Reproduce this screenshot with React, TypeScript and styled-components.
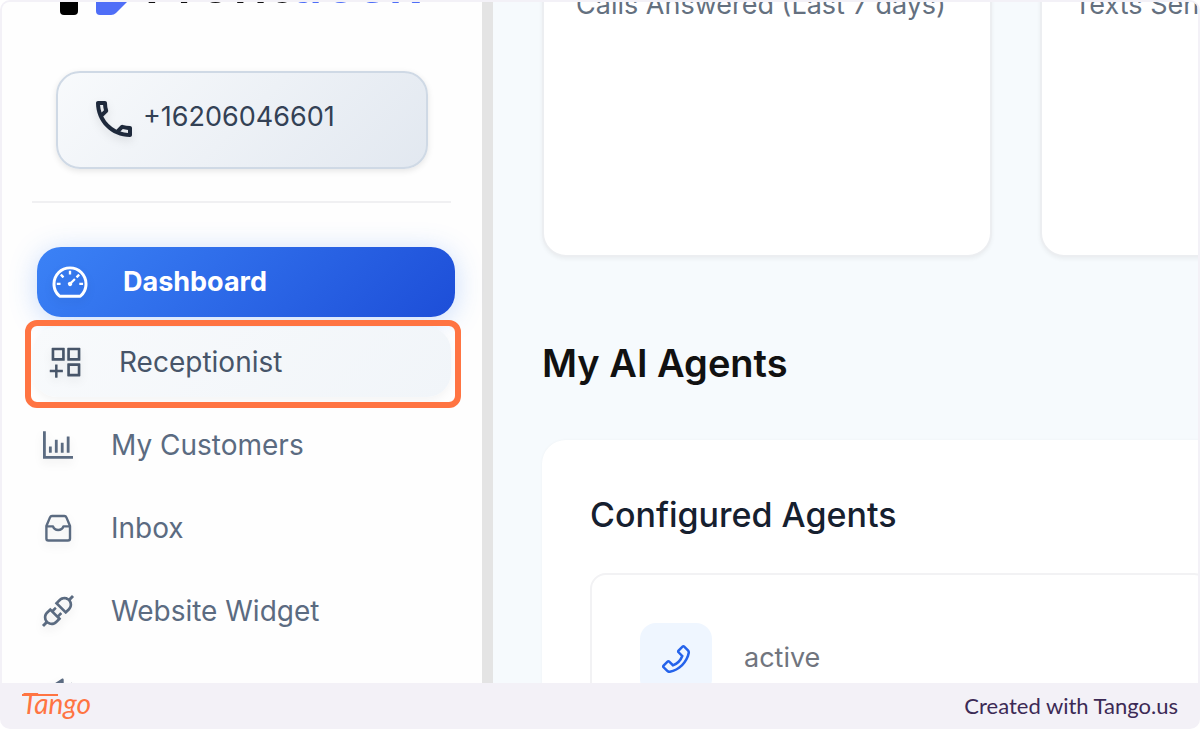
import React from 'react';
import styled, { createGlobalStyle, css } from 'styled-components';
import {
  AiOutlineApi,
  AiOutlineAppstoreAdd,
  AiOutlineBarChart,
  AiOutlineDashboard,
  AiOutlinePhone,
  AiOutlineSound,
} from 'react-icons/ai';
import { MdOutlineCall } from 'react-icons/md';

const GlobalStyle = createGlobalStyle`
  *, *::before, *::after { box-sizing: border-box; }
  body {
    margin: 0;
    background: #ffffff;
    font-family: Inter, "Liberation Sans", sans-serif;
  }
`;

const Frame = styled.div`
  display: flex;
  flex-direction: column;
  height: 100vh;
  border-radius: 10px;
  overflow: hidden;
  background: #f3f1f7;
`;

const Viewport = styled.div`
  flex: 1;
  min-height: 0;
  display: flex;
  margin: 2px 2px 0;
  border-radius: 8px 8px 0 0;
  overflow: hidden;
  background: #f6fafd;
`;

const Sidebar = styled.aside`
  flex: none;
  width: 491px;
  margin-top: -64px;
  background: #fefefe;
  border-right: 11px solid #e4e4e4;
`;

const Brand = styled.div`
  display: flex;
  align-items: center;
  gap: 14px;
  height: 77px;
  padding-left: 58px;
`;

const Wordmark = styled.span`
  padding-top: 10px;
  font-size: 58px;
  font-weight: 500;
  line-height: 64px;
  color: #111111;

  em {
    font-style: normal;
    color: #4f6ef7;
  }
`;

const NumberCard = styled.div`
  display: flex;
  align-items: flex-start;
  gap: 5px;
  height: 98px;
  margin: 56px 54px 32px;
  padding: 22px 32px;
  border: 2px solid #cfd9e5;
  border-radius: 24px;
  background: linear-gradient(135deg, #f8fafc, #e2e8f0);
  box-shadow: 0 2px 6px rgba(0, 0, 0, 0.1);
  font-size: 27px;
  line-height: 44px;
  color: #334155;

  svg {
    flex: none;
    color: #1e293b;
    filter: drop-shadow(0 4px 4px rgba(0, 0, 0, 0.1));
  }
`;

const Divider = styled.hr`
  height: 2px;
  margin: 0 31px 44px 30px;
  border: 0;
  background: #f0f0f2;
`;

const Nav = styled.nav`
  display: flex;
  flex-direction: column;
  gap: 13px;
  padding: 0 39px 0 23px;
`;

type ItemState = 'idle' | 'hover' | 'active';

const itemStates = {
  idle: css`
    color: #5b6b81;
  `,
  hover: css`
    margin: 0 -8px 0 8px;
    color: #475569;
    background: linear-gradient(135deg, #f8fafc, #f1f5f9);
    box-shadow: 0 4px 8px rgba(0, 0, 0, 0.04);
  `,
  active: css`
    margin: 0 -12px -3px 12px;
    font-size: 27px;
    font-weight: 700;
    color: #ffffff;
    background: linear-gradient(135deg, #3b82f6, #1d4ed8);
    box-shadow: 0 4px 28px rgba(59, 130, 246, 0.28);
  `,
};

const NavItem = styled.a<{ $state: ItemState }>`
  position: relative;
  display: flex;
  align-items: center;
  gap: 33px;
  height: 70px;
  padding-left: 13px;
  border-radius: 24px;
  font-size: 28px;
  line-height: 36px;
  text-decoration: none;
  white-space: nowrap;
  ${({ $state }) => itemStates[$state]}

  svg {
    flex: none;
    filter: drop-shadow(0 4px 4px rgba(0, 0, 0, 0.08));
  }
`;

const Highlight = styled.span`
  position: absolute;
  inset: -7px -10px -11px -8px;
  border: 6px solid #ff7442;
  border-radius: 12px;
`;

const Main = styled.main`
  flex: 1;
  min-width: 0;
  margin-top: -64px;
  padding-left: 49px;
  overflow: hidden;
`;

const Stats = styled.div`
  display: grid;
  grid-template-columns: repeat(2, 450px);
  gap: 48px;
`;

const StatCard = styled.section`
  height: 319px;
  padding: 47px 32px;
  border: 2px solid #eceef1;
  border-radius: 24px;
  background: #ffffff;
  box-shadow: 0 2px 4px rgba(0, 0, 0, 0.05);
  font-size: 27px;
  line-height: 36px;
  color: #64707f;
  white-space: nowrap;
`;

const PageTitle = styled.h1`
  margin: 82px 0 53px;
  font-size: 38px;
  font-weight: 600;
  line-height: 48px;
  color: #111111;
`;

const Panel = styled.section`
  margin-right: -60px;
  padding: 53px 48px;
  border-radius: 24px;
  background: #ffffff;
  box-shadow: 0 0 3px rgba(0, 0, 0, 0.04);
`;

const PanelTitle = styled.h2`
  margin: 0 0 36px;
  font-size: 34px;
  font-weight: 500;
  line-height: 44px;
  color: #16202f;
`;

const AgentCard = styled.div`
  display: flex;
  gap: 32px;
  padding: 48px;
  border: 2px solid #f2f2f4;
  border-radius: 16px;
  font-size: 27px;
  line-height: 70px;
  color: #71757e;
`;

const AgentIcon = styled.span`
  display: flex;
  align-items: center;
  justify-content: center;
  width: 72px;
  height: 72px;
  border-radius: 16px;
  background: #eff6ff;
  color: #2563eb;
`;

const Footer = styled.footer`
  display: flex;
  align-items: center;
  justify-content: space-between;
  height: 46px;
  padding: 0 22px;
  font-family: Lato, "Liberation Sans", sans-serif;
  font-size: 22px;
  line-height: 28px;
  color: #3c2a55;
`;

const TangoLogo = styled.a`
  position: relative;
  padding-bottom: 6px;
  font-size: 28px;
  font-style: italic;
  font-weight: 400;
  color: #ff7442;
  text-decoration: none;

  &::before {
    content: '';
    position: absolute;
    top: 5px;
    left: 0;
    width: 36px;
    height: 2px;
    background: currentColor;
  }
`;

const InboxIcon = ({ size }: { size: number }) => (
  <svg
    width={size}
    height={size}
    viewBox="0 0 40 40"
    fill="none"
    stroke="currentColor"
    strokeWidth="2.4"
    strokeLinejoin="round"
    aria-hidden="true"
  >
    <path d="M8.4 18 12 9.4Q12.6 8 14 8h12.4q1.4 0 2 1.400L32 18v12.500q0 2-2 2H10.400q-2 0-2-2z" />
    <path d="M8.400 18.400H15q1.200 3.600 5.200 3.600t5.200-3.600H32" />
  </svg>
);

const items: { label: string; Icon: React.ComponentType<{ size: number }>; state: ItemState }[] = [
  { label: 'Dashboard', Icon: AiOutlineDashboard, state: 'active' },
  { label: 'Receptionist', Icon: AiOutlineAppstoreAdd, state: 'hover' },
  { label: 'My Customers', Icon: AiOutlineBarChart, state: 'idle' },
  { label: 'Inbox', Icon: InboxIcon, state: 'idle' },
  { label: 'Website Widget', Icon: AiOutlineApi, state: 'idle' },
  { label: 'Make All', Icon: AiOutlineSound, state: 'idle' },
];

export default function App() {
  return (
    <>
      <GlobalStyle />
      <Frame>
        <Viewport>
          <Sidebar>
            <Brand>
              <svg width="70" height="77" viewBox="0 0 70 77" aria-hidden="true">
                <rect x="0" y="0" width="18" height="77" rx="4" fill="#000000" />
                <path d="M36 20h34v41L56 75q-2 2-5 2H40q-4 0-4-4z" fill="#4f6ef7" />
              </svg>
              <Wordmark>
                Front<em>desk</em>
              </Wordmark>
            </Brand>
            <NumberCard>
              <MdOutlineCall size={48} />
              <span>+16206046601</span>
            </NumberCard>
            <Divider />
            <Nav>
              {items.map(({ label, Icon, state }) => (
                <NavItem key={label} href="#" $state={state}>
                  <Icon size={40} />
                  {label}
                  {state === 'hover' && <Highlight />}
                </NavItem>
              ))}
            </Nav>
          </Sidebar>
          <Main>
            <Stats>
              <StatCard>Calls Answered (Last 7 days)</StatCard>
              <StatCard>Texts Sent</StatCard>
            </Stats>
            <PageTitle>My AI Agents</PageTitle>
            <Panel>
              <PanelTitle>Configured Agents</PanelTitle>
              <AgentCard>
                <AgentIcon>
                  <AiOutlinePhone size={36} />
                </AgentIcon>
                active
              </AgentCard>
            </Panel>
          </Main>
        </Viewport>
        <Footer>
          <TangoLogo href="#">Tango</TangoLogo>
          <span>Created with Tango.us</span>
        </Footer>
      </Frame>
    </>
  );
}
